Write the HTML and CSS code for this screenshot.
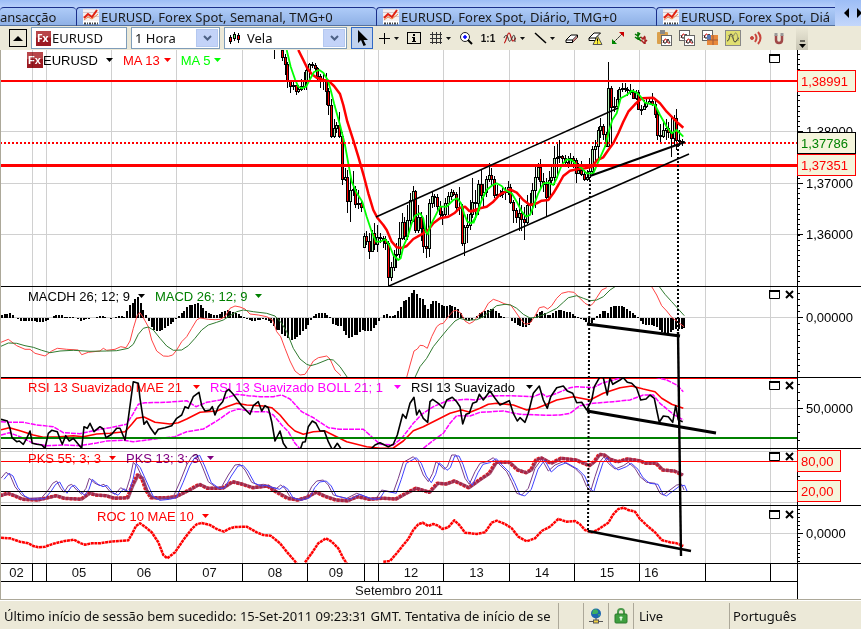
FILE: index.html
```html
<!DOCTYPE html>
<html lang="pt">
<head>
    <meta charset="UTF-8">
    <meta name="viewport" content="width=device-width, initial-scale=1.0">
    <title>EURUSD, Forex Spot</title>
    <link rel="stylesheet" href="styles.css">
</head>
<body>
    <!-- Shared icons -->
    <svg class="defs" width="0" height="0">
        <symbol id="fx" viewBox="0 0 16 16">
            <rect width="16" height="16" fill="#9c1a22"/>
            <rect width="16" height="7" fill="#b8464a"/>
            <text x="1" y="12" font-size="11" font-weight="bold" fill="#fff">Fx</text>
        </symbol>
        <symbol id="tab-chart" viewBox="0 0 16 16">
            <rect width="16" height="12" fill="#f4f0f0"/>
            <path d="M0 0h16M0 3.500h16M0 7.500h16" stroke="#d8c8c8"/>
            <path d="M1 9l4-4 4 3 5-7" fill="none" stroke="#e02010" stroke-width="2"/>
            <path d="M1 11l4-3 4 2 6-5" fill="none" stroke="#f08040"/>
            <path d="M0 13.500h16" stroke="#fff" stroke-width="3"/>
            <path d="M1 14.500h14" stroke="#444" stroke-width="2" stroke-dasharray="2 1 1 1"/>
        </symbol>
        <symbol id="caret" viewBox="0 0 7 4">
            <path d="M0 0h7L3.500 4z" fill="currentColor"/>
        </symbol>
        <symbol id="mini-wave" viewBox="0 0 11 11">
            <rect x=".5" y=".5" width="10" height="10" fill="#fff" stroke="#666"/>
            <path d="M2 8l2-4 1 0 2 4 2 0" fill="none" stroke="#d02020"/>
            <path d="M2 5l1 3 2 0 2-4 2 4" fill="none" stroke="#222"/>
        </symbol>
        <symbol id="maximize" viewBox="0 0 11 9">
            <path d="M.5 1v7.500h10V1" fill="none" stroke="#000"/>
            <path d="M0 1h11" stroke="#000" stroke-width="2"/>
        </symbol>
        <symbol id="close" viewBox="0 0 9 9">
            <path d="M1 1l7 7M8 1L1 8" stroke="#000" stroke-width="2"/>
        </symbol>
    </svg>

    <nav class="tabs">
        <a class="tab tab-first" href="#">ansacção</a>
        <a class="tab tab-weekly" href="#"><svg width="16" height="16"><use href="#tab-chart"/></svg>EURUSD, Forex Spot, Semanal, TMG+0</a>
        <a class="tab tab-daily" href="#"><svg width="16" height="16"><use href="#tab-chart"/></svg>EURUSD, Forex Spot, Diário, TMG+0</a>
        <a class="tab tab-last" href="#"><svg width="16" height="16"><use href="#tab-chart"/></svg>EURUSD, Forex Spot, Diá</a>
        <div class="tab-scroll">
            <button aria-label="Anterior"><svg width="5" height="10"><path d="M5 0v10L0 5z"/></svg></button>
            <button aria-label="Seguinte"><svg width="5" height="10"><path d="M0 0v10l5-5z"/></svg></button>
        </div>
    </nav>

    <div class="toolbar">
        <button class="up" aria-label="Subir"><svg width="10" height="5"><path d="M5 0l5 5H0z"/></svg></button>
        <label class="field symbol-field">
            <svg width="15" height="15"><use href="#fx"/></svg>
            <input type="text" value="EURUSD" aria-label="Instrumento">
        </label>
        <label class="field period-field">
            <select aria-label="Período"><option>1 Hora</option><option>1 Dia</option></select>
            <span class="drop"><svg width="9" height="6"><path d="M1 1l3.500 3.500L8 1" fill="none" stroke="#4d6185" stroke-width="2"/></svg></span>
        </label>
        <label class="field type-field">
            <svg width="13" height="14" shape-rendering="crispEdges">
                <path d="M2.500 4v9M6.500 1v9M10.500 2v10" stroke="#000"/>
                <path d="M1 6h3v5H1zM5 3h3v5H5zM9 4h3v5H9z" fill="#000"/><path d="M2 7h1v3H2z" fill="#f00"/>
                <path d="M6 4h1v3H6z" fill="#6f6"/><path d="M10 5h1v3h-1z" fill="#f00"/>
            </svg>
            <select aria-label="Tipo de gráfico"><option>Vela</option><option>Linha</option></select>
            <span class="drop"><svg width="9" height="6"><path d="M1 1l3.500 3.500L8 1" fill="none" stroke="#4d6185" stroke-width="2"/></svg></span>
        </label>

        <div class="tools">
            <button class="tool active" aria-label="Cursor"><svg width="16" height="16"><path d="M4 0v13l3-3 2.500 6 2.500-1-2.500-5H14z"/></svg></button>
            <button class="tool split" aria-label="Mira"><svg width="16" height="16" shape-rendering="crispEdges"><path d="M8.500 3v11M3 8.500h11" stroke="#000" fill="none"/></svg><svg class="caret" width="5" height="3"><use href="#caret"/></svg></button>
            <button class="tool" aria-label="Informação"><svg width="16" height="16" shape-rendering="crispEdges"><rect x="1.500" y="2.500" width="13" height="11" fill="none" stroke="#000"/><path d="M7 4h2v2H7zM6 7h3v4h1v1H6v-1h1V8H6z"/></svg></button>
            <button class="tool split" aria-label="Grelha"><svg width="16" height="16" shape-rendering="crispEdges"><path d="M4.500 2v12M8.500 2v12M12.500 2v12M2 4.500h12M2 8.500h12M2 12.500h12" stroke="#333"/></svg><svg class="caret" width="5" height="3"><use href="#caret"/></svg></button>
            <button class="tool" aria-label="Ampliar"><svg width="16" height="16"><circle cx="7" cy="7" r="4.500" fill="#fff" stroke="#222"/><path d="M7 5v4M5 7h4" stroke="#00f" stroke-width="1.500"/><path d="M10 10l4 4" stroke="#000" stroke-width="2"/></svg></button>
            <button class="tool ratio">1:1</button>
            <button class="tool split" aria-label="Indicadores"><svg width="16" height="16"><path d="M2 13c2 0 3-10 5-10s2 8 4 8 2-3 3-3" fill="none" stroke="#c01818" stroke-width="1.200"/><path d="M2 8c1-3 3-4 4 0s2 5 4 0 3-3 3 4" fill="none" stroke="#333"/></svg><svg class="caret" width="5" height="3"><use href="#caret"/></svg></button>
            <button class="tool split" aria-label="Linha"><svg width="16" height="16"><path d="M3 3l11 10" stroke="#000" stroke-width="1.500"/></svg><svg class="caret" width="5" height="3"><use href="#caret"/></svg></button>
        </div>
        <div class="tools tools-edit">
            <button class="tool" aria-label="Borracha"><svg width="16" height="16"><path d="M2 10l5-5h6.500l-5 5zM2 10v2.500h6.500V10M8.500 12.500l5-5V5" fill="#fff" stroke="#000"/><path d="M9 12l4-4V6L9 10z" fill="#d08080"/></svg></button>
            <button class="tool" aria-label="Apagar tudo"><svg width="16" height="16"><path d="M2 8l5-5h6.500l-5 5zM2 8v2.500h6.500V8" fill="#fff" stroke="#000"/><path d="M10.500 6l4.500 8.500H6z" fill="#fff040" stroke="#555"/><path d="M10.500 8.500v3M10.500 12.500v1" stroke="#000"/></svg></button>
            <button class="tool" aria-label="Setas"><svg width="16" height="16"><path d="M4 12l8-8" stroke="#000" stroke-dasharray="2 1"/><path d="M2 9v5h5z" fill="#080"/><path d="M9 2h5v5z" fill="#c00"/></svg></button>
            <button class="tool" aria-label="Ondas"><svg width="16" height="16"><path d="M2 4l3 2 2-3M5 2v6l3 3M2 7l3 2 3-2" fill="none" stroke="#070" stroke-width="1.500"/><path d="M8 7l2 2 2-3M8 10l3 3 3-3M12 7v7" fill="none" stroke="#a22" stroke-width="1.500"/></svg></button>
            <button class="tool" aria-label="Colar"><svg width="16" height="16"><rect x="1" y="2" width="11" height="12" rx="1" fill="#dba04c"/><rect x="4" y="0" width="5" height="4" fill="#888"/><use href="#mini-wave" x="5" y="5" width="11" height="11"/></svg></button>
            <button class="tool" aria-label="Copiar"><svg width="16" height="16"><use href="#mini-wave" x="0" y="0" width="11" height="11"/><use href="#mini-wave" x="5" y="5" width="11" height="11"/></svg></button>
            <button class="tool" aria-label="Guardar modelo"><svg width="16" height="16"><use href="#mini-wave" x="0" y="0" width="11" height="11"/><rect x="5" y="5" width="11" height="10" fill="#e8893c"/><rect x="5" y="5" width="4" height="5" fill="#5878b8"/><path d="M11 5v10M5 10h11" stroke="#a05838"/></svg></button>
            <button class="tool" aria-label="Modelo"><svg width="16" height="16"><rect x=".5" y=".5" width="15" height="15" fill="#e0df70" stroke="#888"/><path d="M2 11c3 0 2-7 4-7s2 8 4 8 2-4 4-4" fill="none" stroke="#333"/><path d="M3 6c2-3 4 4 6-1s4 0 4 6" fill="none" stroke="#886"/></svg></button>
            <button class="tool" aria-label="Alerta"><svg width="16" height="16" fill="none" stroke="#c8453c"><circle cx="4" cy="8" r="1.500" fill="#c8453c"/><path d="M7 4q3 4 0 8" stroke-width="2"/><path d="M10 2q5 6 0 12" stroke-width="2"/></svg></button>
            <button class="tool" aria-label="Íman"><svg width="16" height="16"><path d="M5 5v5q0 3 3 3t3-3V5" fill="none" stroke="#a04848" stroke-width="2.500"/><path d="M3.500 3h3v3h-3zM9.500 3h3v3h-3z" fill="#999"/></svg></button>
        </div>
        <button class="overflow" aria-label="Mais"><svg width="7" height="8"><path d="M1 1h5" stroke="#000"/><path d="M0 4h7L3.500 8z"/></svg></button>
    </div>

    <main class="chart">
        <section class="panel price">
            <div class="plot">
                <div class="legend">
                    <button class="black"><svg width="16" height="16"><use href="#fx"/></svg>EURUSD<svg class="mark" width="7" height="4"><use href="#caret"/></svg></button>
                    <button class="red tight">MA 13<svg class="mark" width="7" height="4"><use href="#caret"/></svg></button>
                    <button class="lime tight">MA 5<svg class="mark" width="7" height="4"><use href="#caret"/></svg></button>
                </div>
                <svg class="drawing" id="price" data-top="50"></svg>
                <div class="controls">
                    <button aria-label="Maximizar"><svg width="11" height="9"><use href="#maximize"/></svg></button>
                </div>
            </div>
            <svg class="axis" id="priceAxis" data-top="50"></svg>
        </section>

        <section class="panel macd">
            <div class="plot">
                <div class="legend">
                    <button class="black">MACDH 26; 12; 9<svg class="mark" width="7" height="4"><use href="#caret"/></svg></button>
                    <button class="green">MACD 26; 12; 9<svg class="mark" width="7" height="4"><use href="#caret"/></svg></button>
                </div>
                <svg class="drawing" id="macd" data-top="287"></svg>
                <div class="controls">
                    <button aria-label="Maximizar"><svg width="11" height="9"><use href="#maximize"/></svg></button>
                    <button aria-label="Fechar"><svg width="9" height="9"><use href="#close"/></svg></button>
                </div>
            </div>
            <svg class="axis" id="macdAxis" data-top="287"></svg>
        </section>

        <section class="panel rsi">
            <div class="plot">
                <div class="legend">
                    <button class="red">RSI 13 Suavizado MAE 21<svg class="mark" width="7" height="4"><use href="#caret"/></svg></button>
                    <button class="magenta">RSI 13 Suavizado BOLL 21; 1<svg class="mark" width="7" height="4"><use href="#caret"/></svg></button>
                    <button class="black">RSI 13 Suavizado<svg class="mark" width="7" height="4"><use href="#caret"/></svg></button>
                </div>
                <svg class="drawing" id="rsi" data-top="378"></svg>
                <div class="controls">
                    <button aria-label="Maximizar"><svg width="11" height="9"><use href="#maximize"/></svg></button>
                    <button aria-label="Fechar"><svg width="9" height="9"><use href="#close"/></svg></button>
                </div>
            </div>
            <svg class="axis" id="rsiAxis" data-top="378"></svg>
        </section>

        <section class="panel pks">
            <div class="plot">
                <div class="legend">
                    <button class="red">PKS 55; 3; 3<svg class="mark" width="7" height="4"><use href="#caret"/></svg></button>
                    <button class="purple">PKS 13; 3; 3<svg class="mark" width="7" height="4"><use href="#caret"/></svg></button>
                </div>
                <svg class="drawing" id="pks" data-top="449"></svg>
                <div class="controls">
                    <button aria-label="Maximizar"><svg width="11" height="9"><use href="#maximize"/></svg></button>
                    <button aria-label="Fechar"><svg width="9" height="9"><use href="#close"/></svg></button>
                </div>
            </div>
            <svg class="axis" id="pksAxis" data-top="449"></svg>
        </section>

        <section class="panel roc">
            <div class="plot">
                <div class="legend">
                    <button class="red">ROC 10 MAE 10<svg class="mark" width="7" height="4"><use href="#caret"/></svg></button>
                </div>
                <svg class="drawing" id="roc" data-top="506"></svg>
                <div class="controls">
                    <button aria-label="Maximizar"><svg width="11" height="9"><use href="#maximize"/></svg></button>
                    <button aria-label="Fechar"><svg width="9" height="9"><use href="#close"/></svg></button>
                </div>
            </div>
            <svg class="axis" id="rocAxis" data-top="506"></svg>
        </section>

        <div class="timeline">
            <div class="days" id="days"></div>
            <div class="month">Setembro 2011</div>
        </div>

        <svg class="annotations" id="annotations" data-top="50"></svg>
    </main>

    <footer class="status">
        <div class="message">Último início de sessão bem sucedido: 15-Set-2011 09:23:31 GMT. Tentativa de início de se</div>
        <div class="cell slot"></div>
        <div class="cell slot">
            <svg width="14" height="16"><circle cx="7" cy="5.500" r="5" fill="#1c66b0"/><path d="M4 2q4-2 5 1t-3 3-3 0zM9 6l2 0-1 3z" fill="#3cb060"/><path d="M7 10v3M0 13.500h14" stroke="#555"/><rect x="4.500" y="12" width="5" height="3" fill="#f0d040" stroke="#555"/></svg>
        </div>
        <div class="cell slot">
            <svg width="14" height="16"><path d="M4 8V4q0-3 3-3t3 3v4" fill="none" stroke="#4b9a4b" stroke-width="2"/><rect x="1" y="6" width="12" height="9" rx="1" fill="#3f9f3f" stroke="#2c7a2c"/><path d="M7 8.500v4M5.500 9.500h3" stroke="#e8ffe8" stroke-width="1.500"/></svg>
        </div>
        <div class="cell live">Live</div>
        <div class="cell language">Português</div>
    </footer>

    <script src="chart.js"></script>
</body>
</html>
```

FILE: styles.css
```css
* {
    box-sizing: border-box;
}
body {
    margin: 0;
    background: #ece9d8;
    font-family: "Noto Sans", "Open Sans", sans-serif;
    font-size: 13px;
    color: #111;
}
button {
    padding: 0;
    border: 0;
    background: none;
    font: inherit;
    color: inherit;
}
svg {
    display: block;
    flex: none;
}
.defs {
    display: none;
}

/* Tabs */
.tabs {
    display: flex;
    height: 26px;
    padding-top: 7px;
    background: linear-gradient(#9dbdf6, #b6cffb 7px, #a9c5f5);
    overflow: hidden;
    position: relative;
}
.tab {
    display: flex;
    align-items: center;
    gap: 2px;
    flex: none;
    padding-left: 6px;
    height: 19px;
    border-top: 1px solid #1a2f8a;
    border-left: 1px solid #1a2f8a;
    border-bottom: 1px solid #54719f;
    border-top-left-radius: 4px;
    border-top-right-radius: 4px;
    background: linear-gradient(#aecbf8, #8fb1e6);
    color: #1a1a1a;
    text-decoration: none;
    white-space: nowrap;
}
.tab-first {
    width: 76px;
    padding-left: 0;
    border-left: 0;
}
.tab-weekly {
    width: 300px;
}
.tab-daily {
    width: 280px;
}
.tab-last {
    flex: 1;
    min-width: 0;
    border-top-right-radius: 0;
}
.tab-scroll {
    display: flex;
    gap: 8px;
    flex: none;
    width: 26px;
    height: 26px;
    margin-top: -7px;
    padding-left: 9px;
    background: linear-gradient(#9dbdf6, #c4d7fb);
}

/* Toolbar */
.toolbar {
    display: flex;
    align-items: center;
    gap: 4px;
    height: 24px;
    padding-left: 9px;
    background: #ece9d8;
}
.up {
    display: flex;
    align-items: center;
    justify-content: center;
    width: 18px;
    height: 18px;
    border: 1px solid #000;
}
.field {
    display: flex;
    align-items: center;
    flex: none;
    height: 22px;
    padding: 1px;
    border: 1px solid #7f9db9;
    background: #fff;
}
.field input,
.field select {
    flex: 1;
    min-width: 0;
    padding: 0;
    border: 0;
    background: none;
    appearance: none;
    font: inherit;
    color: inherit;
}
.symbol-field {
    width: 96px;
    padding-left: 4px;
    gap: 1px;
}
.period-field {
    width: 89px;
    padding-left: 3px;
}
.type-field {
    width: 123px;
    padding-left: 3px;
    gap: 6px;
}
.drop {
    display: flex;
    align-items: center;
    justify-content: center;
    width: 22px;
    height: 18px;
    border: 1px solid #b4c8f0;
    background: #c3d3f8;
}
.tools {
    display: flex;
}
.tools-edit {
    gap: 1px;
    margin-left: -2px;
}
.tool {
    display: flex;
    align-items: center;
    justify-content: center;
    width: 22px;
    height: 22px;
}
.tool.active {
    border: 1px solid #316ac5;
    background: #c1d2ee;
}
.tool.split {
    width: 30px;
    padding-left: 3px;
    justify-content: flex-start;
    gap: 2px;
}
.ratio {
    font-family: "Liberation Sans", sans-serif;
    font-size: 10px;
    font-weight: bold;
}
.overflow {
    display: flex;
    align-items: flex-end;
    justify-content: center;
    align-self: stretch;
    width: 12px;
    padding-bottom: 2px;
    margin-left: 2px;
    background: linear-gradient(#ece9d8, #c8c5b4);
}

/* Chart */
.chart {
    position: relative;
    border-left: 1px solid #aca899;
    border-bottom: 1px solid #aca899;
    background: #fff;
    font-family: "Liberation Sans", Arial, sans-serif;
}
.panel {
    display: grid;
    grid-template-columns: 1fr 64px;
    grid-template-rows: 100%;
    border-bottom: 1px solid #000;
}
.price {
    height: 237px;
}
.macd {
    height: 91px;
}
.rsi {
    height: 71px;
}
.pks {
    height: 57px;
}
.roc {
    height: 58px;
}
.plot {
    position: relative;
    min-width: 0;
}
.drawing {
    position: absolute;
    inset: 0;
    width: 100%;
    height: 100%;
    overflow: hidden;
    mix-blend-mode: multiply;
    pointer-events: none;
}
.axis {
    width: 100%;
    height: 100%;
    border-left: 1px solid #000;
    overflow: visible;
}
.axis text {
    font-size: 13px;
}
.legend {
    position: absolute;
    top: 0;
    left: 27px;
    display: flex;
    gap: 10px;
}
.legend button {
    display: flex;
    align-items: center;
    height: 18px;
    white-space: nowrap;
}
.price .legend {
    top: 1px;
    left: 26px;
}
.roc .legend {
    top: 1px;
    left: 96px;
}
.mark {
    margin-left: 8px;
}
.rsi .mark {
    margin-left: 11px;
}
.tight .mark {
    margin-left: 4px;
}
.controls {
    position: absolute;
    top: 3px;
    right: 3px;
    display: flex;
    gap: 5px;
}
.price .controls {
    right: 17px;
    top: 4px;
}
.roc .controls {
    top: 4px;
}
.black {
    color: #000;
}
.red {
    color: #f00;
}
.lime {
    color: #0f0;
}
.green {
    color: #008000;
}
.magenta {
    color: #f0f;
}
.purple {
    color: #800080;
}
.timeline {
    margin-right: 63px;
    border-right: 1px solid #000;
    text-align: center;
}
.days {
    display: flex;
    height: 18px;
    border-bottom: 1px solid #000;
}
.day {
    flex: none;
    border-right: 1px solid #000;
    line-height: 17px;
}
.day.current {
    padding-left: 4px;
    text-align: left;
}
.month {
    height: 17px;
    line-height: 17px;
}
.annotations {
    position: absolute;
    inset: 0;
    width: 100%;
    height: 100%;
    pointer-events: none;
}

/* Status bar */
.status {
    display: flex;
    align-items: center;
    height: 29px;
    padding-top: 2px;
    border-top: 1px solid #fff;
}
.message {
    flex: 1;
    min-width: 0;
    padding-left: 4px;
    overflow: hidden;
    white-space: nowrap;
}
.cell {
    display: flex;
    align-items: center;
    flex: none;
    height: 26px;
    padding-left: 5px;
    border-left: 1px solid #aca899;
}
.slot {
    width: 25px;
}
.live {
    width: 96px;
}
.language {
    width: 132px;
    padding-left: 3px;
}
```

FILE: chart.js
```javascript
const SVG = 'http://www.w3.org/2000/svg';
const STEP = 2.72; // one hour

// Every panel shows its own slice of one shared coordinate space
function layer(id) {
    const svg = document.getElementById(id);
    const g = document.createElementNS(SVG, 'g');
    const left = svg.classList.contains('axis') ? 0 : -1;
    g.setAttribute('transform', `translate(${left}, ${-svg.dataset.top})`);
    svg.appendChild(g);
    return g;
}

function add(parent, tag, attrs, text) {
    const el = document.createElementNS(SVG, tag);
    for (const key in attrs) el.setAttribute(key, attrs[key]);
    if (text) el.textContent = text;
    parent.appendChild(el);
    return el;
}

function hline(parent, y, color, width = 1, dash = '') {
    add(parent, 'line', { x1: 0, x2: '101%', y1: y, y2: y, stroke: color, 'stroke-width': width, 'stroke-dasharray': dash, 'shape-rendering': 'crispEdges' });
}

// Points are "x,y" pairs in thirds of a pixel from the segment's origin; ";" lifts the pen
function trace(parent, ox, oy, points, attrs) {
    const d = points.split(';').map(part =>
        'M' + part.trim().split(' ').map(p => {
            const [x, y] = p.split(',').map(Number);
            return `${(ox + x / 3).toFixed(1)} ${(oy + y / 3).toFixed(1)}`;
        }).join('L')).join('');
    add(parent, 'path', Object.assign({ d, fill: 'none', 'stroke-linejoin': 'round' }, attrs));
}

const days = [32, 46, 111, 176, 242, 307, 364, 378, 443, 509, 574, 639, 705, 770];
const names = ['02', '', '05', '06', '07', '08', '09', '', '12', '13', '14', '15', '16', ''];

function grid(parent, rows) {
    days.forEach(x => add(parent, 'path', { d: `M${x + 0.5} 50V563`, stroke: '#d0d0d0' }));
    rows.forEach(y => hline(parent, y + 0.5, '#d0d0d0'));
}

function ticks(parent, from, to, step) {
    for (let y = from; y < to; y += step) {
        add(parent, 'path', { d: `M0 ${Math.round(y) + 0.5}h2`, stroke: '#000' });
    }
}

function label(parent, y, text) {
    add(parent, 'path', { d: `M0 ${y + 0.5}h5`, stroke: '#000' });
    add(parent, 'text', { x: 8, y: y + 5 }, text);
}

function tag(parent, y, width, text, color, border) {
    add(parent, 'rect', { x: -0.5, y: y - 10.5, width, height: 21, fill: '#f5f5dc', stroke: border });
    add(parent, 'text', { x: 3, y: y + 5, fill: color }, text);
}

// Price: close, high, low (and open, where it gaps away from the last close)
const candles = `57 50 61 50,64 54 75,81 62 88,86 80 93,85 82 90,91 85 95,89 85 93,86 79 91,80 72 90,70 68 90,64 63 80,65 62 68,
68 63 72,76 67 80,79 74 88,80 74 90,91 73 105,105 88 115,136 99 138,128 119 138,125 122 133,136 112 138,179 132 185,177 168 181,
201 170 213,190 177 222,189 171 196,204 186 208,203 190 209,207 200 212,236 233 248 247,241 231 245,251 233 259,233 230 252,
244 223 250,237 225 252,238 233 243,239 236 248,243 236 250,277 241 286,267 262 281,255 250 271,254 243 268,238 222 258,
222 213 240,236 217 240,220 205 240,200 193 228,191 186 222,230 190 233,217 205 233,228 212 241,246 222 253,248 215 258,
203 199 257,196 192 208,197 194 207,206 194 212,214 201 218,214 211 225,203 198 217,196 192 215,192 189 200,194 190 196,
207 192 210,208 187 215,243 204 246,227 225 256,225 214 243,214 200 230,202 178 218,203 190 220,184 180 215,195 170 200,
192 184 207,179 176 197,175 163 182,179 168 186,195 176 198,194 185 198,194 190 197,191 188 198,192 187 200,187 181 195,
202 184 204,210 200 223,217 208 223,213 198 231,219 205 231,222 207 240,205 195 224,204 193 213,190 183 215,177 166 208,
167 163 180,181 159 190,184 173 192,197 178 216,180 171 200,177 167 184,158 146 185,157 142 178,156 140 163,158 155 163,
162 155 166,165 156 168,158 153 167,160 156 168,173 158 183,170 163 174,174 161 176,179 170 181,177 170 181,171 158 181,
149 146 175,146 140 163,130 127 159,126 118 138,134 124 140,146 132 147,88 62 146,107 86 147,106 97 112,99 90 107,89 87 100,
88 83 92,89 83 92,90 87 96,92 84 95,98 89 99,92 90 100,109 90 110,109 105 115,106 100 110,103 98 108,101 98 103,104 93 106,
114 98 118,135 110 140,136 124 144,130 121 138,128 119 140,132 122 138,138 118 157,118 115 145,140 109 150,141 130 146,142 139 146`;

const price = layer('price');
grid(price, [131, 183, 234]);
add(price, 'path', { d: 'M274.500 50v9', stroke: '#000' });
let last = 50;
candles.split(',').forEach((row, i) => {
    const [close, high, low, gap] = row.trim().split(' ').map(Number);
    const open = gap || last;
    const x = Math.round(282 + i * STEP);
    add(price, 'path', { d: `M${x + 0.5} ${high}V${low}`, stroke: '#000' });
    add(price, 'rect', {
        x: x - 0.5, y: Math.min(open, close) + 0.5, width: 2, height: Math.max(Math.abs(close - open), 1),
        fill: close > open ? '#f00' : '#b0f0b0', stroke: '#000', 'shape-rendering': 'crispEdges'
    });
    last = close;
});

const ma13 = { stroke: '#f00', 'stroke-width': 2.5 };
trace(price, 260, 50, '115,0 130,30 142,55 155,72 170,83 190,90 205,92 222,108 240,132 250,165 262,215 278,265 295,320 312,380 325,430 340,480 353,505 370,525 380,540 395,575 410,592 425,594 440,588 460,567 490,550 505,540 520,520 540,505 565,500 585,488 600,473 615,470 628,483 640,483 660,480', ma13);
trace(price, 470, 50, '0,485 30,475 50,470 70,455 90,433 120,418 140,428 160,450 180,465 200,460 215,452 235,450 250,430 265,405 280,378 300,362 325,357 345,355 365,350 382,330 400,322 415,300 430,280 445,250 460,215 475,185 495,163 515,145 550,143 570,160 590,185 610,205 625,220 640,233', ma13);
const ma5 = { stroke: '#0f0', 'stroke-width': 1.8 };
trace(price, 260, 50, '80,0 92,50 105,88 115,110 125,115 138,110 150,88 162,66 178,60 190,68 203,90 212,120 222,160 240,225 255,285 265,340 275,395 288,425 307,455 320,500 335,545 348,575 360,575 376,568 388,585 400,615 415,630 422,625 430,590 443,560 455,520 465,497 480,490 490,505 497,545 503,553 512,525 525,500 540,470 560,470 580,450 592,445 603,460 612,490 622,515 635,520 645,505 660,470', ma5);
trace(price, 470, 50, '10,520 22,490 35,450 50,420 68,405 80,400 95,408 105,420 125,430 140,455 155,485 168,500 180,495 192,465 205,430 220,400 235,398 250,405 260,385 275,345 290,328 305,330 320,345 335,355 350,370 370,370 385,335 405,290 418,240 427,210 440,190 452,145 470,135 485,122 500,128 512,140 525,158 545,163 555,165 570,195 590,230 605,250 620,240 640,260', ma5);
hline(price, 81, '#f00', 2);
hline(price, 143, '#f00', 2, '2 2');
hline(price, 165.5, '#f00', 3);

// MACD
function bars(parent, x, heights) {
    heights.split(' ').forEach((h, i) => {
        const size = Math.round(Math.abs(h) / 3);
        if (size > 0) {
            add(parent, 'rect', { x: Math.round(x + i * STEP), y: h > 0 ? 318 - size : 318, width: 2, height: size });
        }
    });
}
const macd = layer('macd');
grid(macd, [317]);
bars(macd, 1, '10 12 12 14 8 0 -4 -8 -10 -10 -10 -8 -10 -13 -13 -13 -10 -5 0 5 8 8 8 4 3 2 2 -1 -3 -8 -5 -3 -2 1 1 2 5 5 4 1 -2 1 4 7 6 2 20 38 45 58 62 45 25 8 -10 -28 -35 -40 -40 -35 -30 -25 -18 -12 -2 5 15 22 32 38 40 42 45 38 30 20 15 12 10 10 12 17 22 25 22 17 15 12 5 2 -3 -6 -8 -8 -5 -6 -2 -5 -8 -15 -25 -35 -35 -48 -55 -60');
bars(macd, 291, '-65 -62 -58 -52 -40 -32 -20 -5 5 12 14 14 14 8 2 -18 -22 -24 -24 -40 -52 -60 -58 -52 -50 -42 -35 -38 -38 -38 -30 -20 -10 0 8 12 5 5 10 20 32 50 55 62 75 85 72 60 58 40 28 42 50 50 45 38 35 35 38 35 32 28 15 2 -5 -8 -5 0 5 15 18 22 25 28 28 22 15 7 2 0 0 -8 -15 -22 -25 -28 -28 -22 -12 2 12 18 20 15 10 10 15 22 25 25 22 18');
bars(macd, 569, '18 12 5 2 -2 -6 -12 -15 -15 -5 5 12 22 22 14 32 35 35 35 35 33 28 20 16 10 2 -10 -18 -20 -20 -20 -25 -28 -35 -42 -45 -45 -42 -35 -32 -32 -32 -30');
const macdLine = { stroke: '#f44', 'stroke-width': 1 };
trace(macd, 0, 285, '3,172 25,163 50,182 75,193 90,193 105,205 135,213 155,198 172,190 200,193 235,195 245,209 265,202 300,198 310,190 320,196 345,193 362,185 378,188 390,168 400,130 412,90 420,83 430,98 445,125 455,165 470,198 490,213 505,214 518,210 530,195 545,170 560,155 575,130 590,105 600,99 625,103 645,104 660,103 675,95 690,70 705,63 720,66 735,72 750,87 775,90 800,95 818,105 830,140 842,155 855,190 870,228', macdLine);
trace(macd, 280, 285, '30,228 45,258 60,270 75,268 85,253 100,228 115,218 140,213 150,222 165,255 183,272;380,277 390,240 402,198 412,192 420,181 430,182 442,190 455,155 470,125 480,117 490,115 505,95 520,78 530,76 543,85 555,108 568,116 580,110 598,88 612,78 625,55 640,43 655,48 675,57 692,60 705,78 720,100 735,118 750,115 765,93 778,68 792,65 803,72 815,62 830,40 845,25 865,20 882,22 900,40 915,55 930,63 940,55 950,38 965,15 980,8;1115,5 1130,30 1145,62 1160,78 1175,97 1190,108 1212,125', macdLine);
const signalLine = { stroke: '#2f7a2f', 'stroke-width': 1 };
trace(macd, 0, 285, '3,184 25,174 50,175 75,182 100,187 125,196 150,203 180,198 220,196 270,199 320,198 350,197 385,190 400,178 415,148 430,130 445,126 460,135 480,160 500,183 520,196 545,195 565,182 585,160 605,135 625,120 650,112 670,105 690,92 710,80 730,75 760,80 800,85 825,93 845,115 860,140 880,190 900,222 920,238 932,242 950,237 985,223 1000,225 1020,245 1042,277', signalLine);
trace(macd, 280, 285, '405,277 420,245 440,220 460,185 480,160 505,130 525,108 540,100 560,106 590,104 610,95 630,78 650,62 675,58 692,60 710,70 730,88 750,99 770,97 800,85 830,70 850,52 865,38 890,32 910,40 930,47 950,45 970,35 990,15 1005,5;1138,5 1155,28 1175,50 1195,72 1213,92', signalLine);

// RSI
const rsi = layer('rsi');
grid(rsi, [408]);
hline(rsi, 378.5, '#f00', 1);
const band = { stroke: '#f0f', 'stroke-width': 1.5, 'stroke-dasharray': '5 1' };
trace(rsi, 0, 285, '3,410 25,412 70,412 110,420 160,425 190,443 240,446 290,435 330,428 380,418 400,385 415,358 435,353 500,352 560,347 588,365 620,352 660,345 710,328 745,332 780,335 820,335 845,330 870,342 905,380 940,398 985,428 1020,433 1090,433 1115,455 1140,478 1180,480 1205,460 1240,415 1265,388 1300,365 1340,348 1400,343 1430,345 1470,333 1530,332 1600,335 1625,325 1640,335 1670,325 1710,308 1730,305 1780,308 1805,295 1840,285 1870,276;1965,276 2000,285 2030,300 2050,320', band);
trace(rsi, 0, 285, '3,450 28,443 60,455 100,475 140,482 200,480 240,482 290,474 320,468 370,466 400,470 440,465 525,455 560,440 610,432 650,408 690,380 715,372 760,380 800,380 820,390 845,420 865,440 885,475 900,492;1270,490 1295,470 1330,445 1350,415 1370,392 1410,393 1440,382 1510,378 1560,388 1640,391 1680,390 1710,385 1740,362 1780,355 1840,350 1890,345 1930,330 1960,330 1980,355 2020,388 2050,405', band);
trace(rsi, 0, 285, '3,434 28,428 60,437 100,450 130,457 180,455 220,452 250,455 290,447 330,445 375,440 395,418 410,400 432,396 465,412 510,417 535,413 560,402 600,382 650,378 680,365 710,355 740,360 790,363 815,368 840,390 865,420 885,438 910,448 940,440 975,438 1005,453 1040,470 1100,485 1140,490 1180,489 1210,468 1240,437 1270,425 1310,405 1350,385 1385,375 1410,382 1440,370 1465,358 1490,355 1540,360 1580,375 1610,370 1640,358 1670,345 1720,335 1770,345 1810,325 1860,308 1895,303 1930,312 1965,320 1985,340 2015,358 2050,370', { stroke: '#f00', 'stroke-width': 1.6 });
hline(rsi, 438, '#008000', 2);
const rsiLine = { stroke: '#000', 'stroke-width': 1.6 };
trace(rsi, 0, 285, '3,403 22,408 30,430 36,458 50,470 58,468 70,478 80,460 90,438 97,475 110,478 125,480 135,490 145,445 155,436 172,440 180,462 187,478 197,452 208,468 220,460 235,478 245,490 252,425 262,430 270,415 282,440 300,425 310,432 318,458 335,448 350,430 360,430 375,465 385,400 400,290 415,295 420,340 432,418 440,408 452,430 465,448 475,433 495,428 515,422 530,400 545,390 555,365 565,370 580,335 597,322 605,362 615,378 630,375 637,365 645,390 655,365 668,350 678,320 686,313 700,328 725,362 750,388 760,362 775,350 785,378 795,362 805,368 815,410 825,468 840,438 850,475 862,492', rsiLine);
trace(rsi, 280, 285, '62,490 68,472 76,470 85,425 97,408 108,415 120,438 133,437 145,470 155,490;162,490 172,475 182,490;275,490 285,480 300,473 325,485 340,478 352,450 368,388 378,400 390,355 402,337 410,390 418,375 430,400 443,412 450,350 458,343 475,355 490,370 500,345 517,337 530,350 540,365 548,417 558,388 568,385 578,355 590,350 598,328 610,345 630,318 645,340 660,360 688,347 700,385 712,408 720,398 735,412 745,385 760,325 778,303 790,345 802,370 812,335 830,308 850,303 862,318 878,325 890,353 905,352 920,375 935,345 943,305 960,275 970,278 982,330 990,278 998,298 1020,285 1030,278 1042,292 1055,295 1070,310 1082,345 1098,342 1110,330 1123,340 1130,375 1138,412 1150,393 1165,395 1178,412 1187,362 1195,405 1208,410', rsiLine);

// PKS
const pks = layer('pks');
grid(pks, [451, 502]);
const slow = '3,152 25,145 45,152 70,163 115,165 145,158 170,152 195,160 245,163 270,145 290,150 320,152 345,160 385,158 400,120 415,90 428,100 440,135 455,158 500,158 530,155 570,135 600,118 625,130 670,130 700,110 730,118 760,128 805,123 830,140 865,160 895,165 920,158 950,142 980,155 1010,165 1045,167 1075,155 1110,163 1150,160 1190,162 1220,145 1250,130 1290,142 1315,115 1340,117 1365,108 1385,117 1408,128 1440,105 1470,85 1490,52 1530,52 1555,75 1580,83 1595,75 1610,45 1625,38 1655,55 1685,40 1730,45 1770,62 1785,50 1800,28 1815,30 1830,42 1855,50 1885,42 1920,47 1940,55 1970,55 1990,75 2025,78 2050,90';
trace(pks, -1, 445, slow, { stroke: '#f01818', 'stroke-width': 3.5, 'stroke-dasharray': '3 1' });
trace(pks, 0, 445, slow, { stroke: '#8c2c58', 'stroke-width': 3, 'stroke-opacity': 0.75 });
const fast = '3,100 18,82 30,90 45,125 65,150 85,160 125,158 145,135 158,115 170,108 182,130 192,142 205,122 215,118 230,135 245,148 258,130 268,100 285,115 300,122 312,118 330,140 345,148 362,128 378,138 390,100 400,52 412,65 430,105 450,150 470,163 500,160 520,155 540,110 560,60 575,35 590,28 605,60 625,110 650,128 665,125 685,90 705,60 720,58 735,75 755,112 775,120 790,118 810,125 830,130 842,120 855,130 870,155 895,163 920,155 935,125 950,108 970,105 985,120 1000,150 1040,160 1070,145 1110,160 1130,158 1145,135 1180,142 1195,100 1210,52 1240,35 1255,52 1270,90 1285,110 1298,85 1308,50 1320,60 1332,73 1342,65 1355,30 1368,30 1380,55 1395,100 1408,118 1425,80 1440,55 1460,50 1480,38 1495,55 1520,80 1535,110 1550,145 1565,150 1585,130 1605,70 1625,42 1645,78 1665,60 1690,50 1725,70 1745,90 1760,125 1772,138 1785,95 1800,50 1812,35 1825,55 1845,72 1870,62 1885,52 1905,70 1920,95 1940,112 1965,115 1980,145 1990,150 2010,135 2030,120 2045,118 2052,135';
trace(pks, 0, 445, fast, { stroke: '#7a3d86', 'stroke-width': 1 });
trace(pks, 3, 446, fast, { stroke: '#4040ff', 'stroke-width': 1 });
hline(pks, 461.5, '#f00', 1);
hline(pks, 491.5, '#000', 1);

// ROC
const roc = layer('roc');
grid(roc, [533]);
trace(roc, 0, 445, '3,278 30,280 60,290 85,295 100,303 115,307 135,305 160,296 190,289 222,284 240,294 255,299 275,295 300,295 330,290 385,286 397,265 408,243 420,235 435,245 455,262 475,292 490,330 502,340 525,322 550,285 575,252 590,238 605,234 630,240 650,252 672,260 690,250 705,246 740,245 770,262 790,270 812,272 840,295 860,320 890,355;915,352 935,325 955,295 978,280 995,290 1015,310 1030,340 1040,355;1150,350 1170,348 1190,325 1210,300 1225,282 1240,255 1255,238 1268,233 1285,243 1300,237 1315,242 1327,252 1345,247 1363,226 1378,240 1395,263 1430,267 1455,262 1475,233 1490,227 1515,237 1535,250 1555,275 1580,289 1605,280 1625,258 1650,245 1675,222 1700,230 1725,228 1740,238 1755,255 1775,262 1792,255 1825,233 1840,208 1855,192 1870,188 1885,195 1905,200 1920,222 1945,245 1965,262 1985,285 2010,292 2030,295 2050,303', { stroke: '#f00', 'stroke-width': 2.5, 'stroke-dasharray': '3 0.6' });

// Axes
const priceAxis = layer('priceAxis');
ticks(priceAxis, 54, 286, 5.16);
label(priceAxis, 131, '1,38000');
label(priceAxis, 183, '1,37000');
label(priceAxis, 234, '1,36000');
tag(priceAxis, 81, 58, '1,38991', '#f00', '#f00');
tag(priceAxis, 143, 58, '1,37786', '#008000', '#000');
tag(priceAxis, 165, 58, '1,37351', '#f00', '#f00');
const macdAxis = layer('macdAxis');
ticks(macdAxis, 293, 377, 6);
label(macdAxis, 317, '0,00000');
const rsiAxis = layer('rsiAxis');
ticks(rsiAxis, 384, 448, 8);
label(rsiAxis, 408, '50,0000');
const pksAxis = layer('pksAxis');
ticks(pksAxis, 476, 505, 10);
tag(pksAxis, 461, 43, '80,00', '#f00', '#f00');
tag(pksAxis, 491, 43, '20,00', '#f00', '#f00');
const rocAxis = layer('rocAxis');
ticks(rocAxis, 509, 562, 4);
label(rocAxis, 533, '0,0000');

// Day cells under the panels
const dayRow = document.getElementById('days');
days.forEach((x, i) => {
    const cell = document.createElement('div');
    cell.className = names[i] === '16' ? 'day current' : 'day';
    cell.style.width = (x - (i ? days[i - 1] : 0)) + 'px';
    if (names[i]) cell.textContent = names[i];
    dayRow.appendChild(cell);
});

// Trend lines drawn by hand over the panels
const notes = layer('annotations');
const lines = [
    [376, 217, 618, 108, 1.5],
    [389, 286, 689, 154, 1.5],
    [590, 176, 685, 142, 2.2],
    [587, 324, 680, 336, 2.8],
    [587, 411, 716, 433, 2.8],
    [588, 531, 691, 551, 2.8],
    [678, 332, 681, 556, 2.4],
    [590, 180, 588, 531, 2, '2 2'],
    [678, 145, 678, 331, 2, '2 2']
];
lines.forEach(([x1, y1, x2, y2, width, dash]) => {
    add(notes, 'line', { x1, y1, x2, y2, stroke: '#000', 'stroke-width': width, 'stroke-dasharray': dash || '' });
});
```
